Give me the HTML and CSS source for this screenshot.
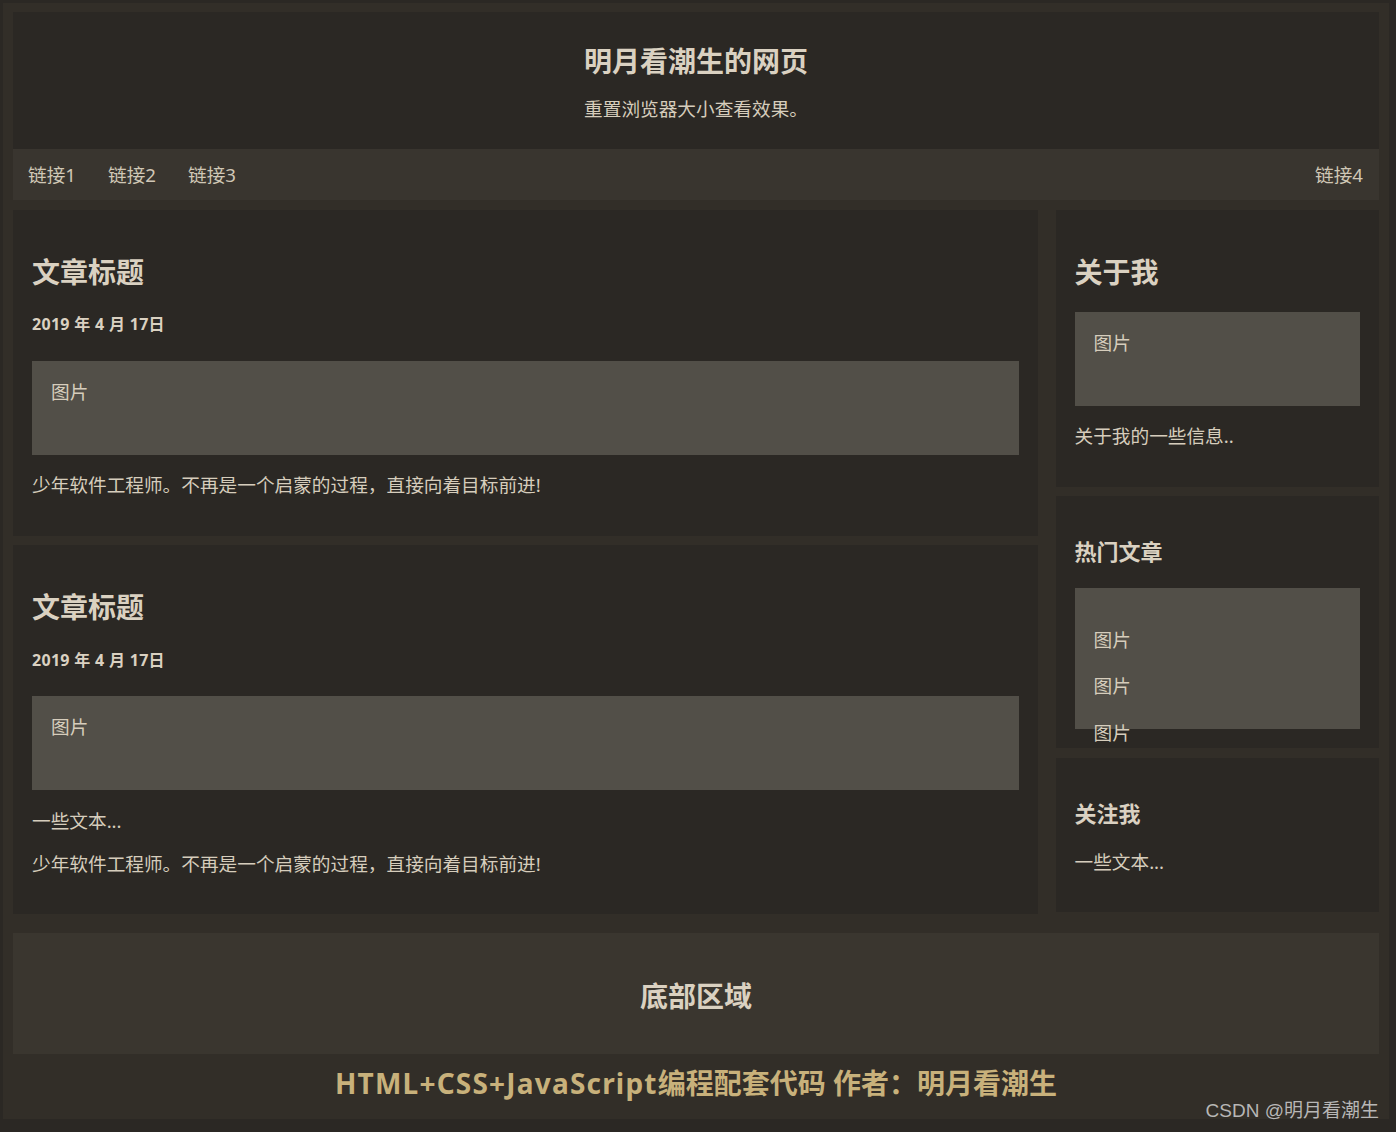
FILE: index.html
```html
<!DOCTYPE html>
<html lang="zh-CN">
<head>
<meta charset="utf-8">
<title>明月看潮生的网页</title>
<link rel="stylesheet" href="styles.css">
</head>
<body>
<div class="page">
  <header class="header">
    <h1>明月看潮生的网页</h1>
    <p>重置浏览器大小查看效果。</p>
  </header>
  <nav class="topnav">
    <a href="#">链接1</a>
    <a href="#">链接2</a>
    <a href="#">链接3</a>
    <a href="#" class="right">链接4</a>
  </nav>
  <div class="row">
    <div class="leftcolumn">
      <div class="card">
        <h2>文章标题</h2>
        <h5>2019 年 4 月 17日</h5>
        <div class="fakeimg">图片</div>
        <p>少年软件工程师。不再是一个启蒙的过程，直接向着目标前进!</p>
      </div>
      <div class="card">
        <h2>文章标题</h2>
        <h5>2019 年 4 月 17日</h5>
        <div class="fakeimg">图片</div>
        <p>一些文本...</p>
        <p>少年软件工程师。不再是一个启蒙的过程，直接向着目标前进!</p>
      </div>
    </div>
    <div class="rightcolumn">
      <div class="card">
        <h2>关于我</h2>
        <div class="fakeimg">图片</div>
        <p>关于我的一些信息..</p>
      </div>
      <div class="card">
        <h3>热门文章</h3>
        <div class="fakeimg tall"><p>图片</p><p>图片</p><p>图片</p></div>
      </div>
      <div class="card">
        <h3>关注我</h3>
        <p>一些文本...</p>
      </div>
    </div>
  </div>
  <footer class="footer"><h2>底部区域</h2></footer>
  <p class="credit"><span class="latin">HTML+CSS+JavaScript</span>编程配套代码 作者：明月看潮生</p>
  <span class="watermark">CSDN @明月看潮生</span>
</div>
</body>
</html>
```

FILE: styles.css
```css
html {
  background: #2b2824;
}

body {
  margin: 0;
  font-family: "Noto Sans", "Noto Sans CJK SC", sans-serif;
  font-size: 18.67px;
  line-height: 24.6px;
  color: #d6cdbc;
}

h1, h2, h3, h5, p {
  margin: 0;
}

.page {
  position: relative;
  margin: 3px 7px 12px 3px;
  padding: 9px 10px 17px;
  background: #322e28;
}

.header {
  background: #2b2824;
  text-align: center;
  padding: 31px 19px 27px;
}

.header h1 {
  font-size: 28px;
  line-height: 37px;
  font-weight: 700;
  margin-bottom: 17px;
  color: #dad1c1;
}

.topnav {
  display: flex;
  background: #39352f;
}

.topnav a {
  padding: 14px 16px;
  line-height: 23px;
  color: #d0c7b6;
  text-decoration: none;
}

.topnav a:first-child {
  padding-left: 15px;
}

.topnav .right {
  margin-left: auto;
}

.row {
  display: flex;
  align-items: flex-start;
  margin-top: 10px;
}

.leftcolumn {
  flex: 0 0 75%;
  display: flex;
  flex-direction: column;
  gap: 9.5px;
}

.rightcolumn {
  flex: 0 0 25%;
  box-sizing: border-box;
  padding-left: 18px;
  display: flex;
  flex-direction: column;
  gap: 9.5px;
}

.card {
  background: #2b2824;
  padding: 19px;
}

.card h2 {
  font-size: 28px;
  line-height: 37px;
  margin: 25px 0 21px;
  color: #dad1c1;
}

.card h3 {
  font-size: 22px;
  line-height: 29px;
  margin: 22px 0;
  color: #dad1c1;
}

.card h5 {
  font-size: 16px;
  line-height: 21px;
  font-weight: 700;
  letter-spacing: 0.3px;
  margin: 23.5px 0 25.5px;
  color: #dad1c1;
}

.card p {
  margin: 18.67px 0;
}

.fakeimg {
  background: #524f48;
  height: 94px;
  box-sizing: border-box;
  padding: 19px;
}

.fakeimg.tall {
  height: 141px;
}

.fakeimg.tall p {
  line-height: 28px;
}

.footer {
  margin-top: 19px;
  background: #3a362f;
  padding: 19px;
  text-align: center;
}

.footer h2 {
  font-size: 28px;
  line-height: 37px;
  margin: 26px 0 20px;
  color: #dad1c1;
}

.credit {
  margin-top: 11px;
  font-size: 28px;
  line-height: 37px;
  font-weight: 700;
  text-align: center;
  color: #c8b17b;
}

.credit .latin {
  letter-spacing: 1.2px;
}

.watermark {
  position: absolute;
  right: 10px;
  bottom: -3px;
  font-family: "Liberation Sans", "Noto Sans CJK SC", sans-serif;
  font-size: 19px;
  line-height: 22px;
  color: rgba(215, 215, 215, 0.82);
}
```
